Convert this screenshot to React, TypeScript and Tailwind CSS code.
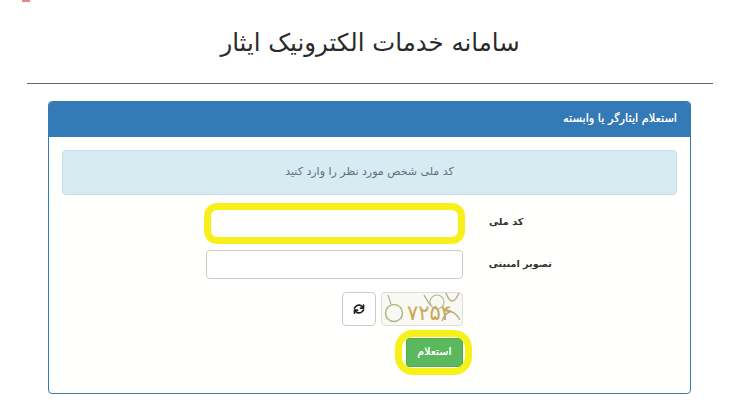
export default function App() {
  return (
    <div dir="rtl" className="relative w-[740px] h-[416px] overflow-hidden bg-white font-['DejaVu_Sans',sans-serif] text-[#333]">
      <span className="absolute left-[22px] top-0 w-[8px] h-[2px] bg-[#d9534f] opacity-70"></span>

      <div className="px-[27px]">
        <h1 className="h-[83px] pt-[4px] flex items-center justify-center text-[24.4px] font-normal text-[#2a2a2a]">سامانه خدمات الکترونیک ایثار</h1>
        <hr className="border-t border-[#666]" />
      </div>

      <div className="ml-[48px] mr-[49px] mt-[17px] h-[293px] bg-[#fffffd] border border-[#337ab7] rounded-[4px] overflow-hidden">
        <div className="h-[35px] bg-[#337ab7] px-[13px] flex items-center text-white text-[11.3px] [text-shadow:0_0_0.6px_#fff]">استعلام ایثارگر یا وابسته</div>

        <div className="px-[13px] pt-[13px]">
          <div className="h-[45px] bg-[#d7ebf3] border border-[#c3e0ea] rounded-[4px] flex items-center justify-center text-[11px] text-[#5b7180]">کد ملی شخص مورد نظر را وارد کنید</div>

          <div className="mt-[14px] flex flex-col gap-[12px] pr-[125px]">
            <div className="flex items-center gap-[26px]">
              <label className="w-[63px] pb-[3px] text-[9.7px] font-bold text-left text-[#333]">کد ملی</label>
              <div className="relative w-[257px] h-[29px]">
                <input className="w-full h-full bg-white border border-[#ccc] rounded-[4px]" />
                <span className="absolute -inset-x-[2px] -top-[6px] -bottom-[6px] border-[7px] border-[#f7f01a] rounded-[13px]"></span>
              </div>
            </div>

            <div className="flex items-center gap-[26px]">
              <label className="w-[63px] pb-[1px] text-[9.7px] font-bold whitespace-nowrap">تصویر امنیتی</label>
              <div className="w-[257px] h-[29px]">
                <input className="w-full h-full bg-white border border-[#ccc] rounded-[4px]" />
              </div>
            </div>

            <div className="mt-[1px] flex items-center gap-[5px] mr-[89px]">
              <div className="w-[82px] h-[34px] border border-[#ddd] rounded-[4px] bg-[#f8f9f2] overflow-hidden">
                <svg width="80" height="32" viewBox="0 0 80 32">
                  <circle cx="12" cy="20" r="8.5" fill="none" stroke="#a9b98a" strokeWidth="1.5" />
                  <path d="M9 11 L6 2" stroke="#c2a976" strokeWidth="1.2" />
                  <text x="25" y="27" fontSize="21" fill="#c9a85a" direction="ltr">۷۲۵۴</text>
                  <circle cx="55" cy="9" r="7" fill="none" stroke="#b9b3a0" strokeWidth="1.2" />
                  <path d="M64 0 Q70 16 77 0 M60 28 Q68 10 78 27 M42 2 L48 12" fill="none" stroke="#b7a57e" strokeWidth="1.3" />
                </svg>
              </div>
              <button className="w-[34px] h-[34px] border border-[#ccc] rounded-[4px] bg-white flex items-center justify-center">
                <svg width="12" height="12" viewBox="0 0 24 24" fill="none" stroke="#222" strokeWidth="3.5" strokeLinecap="round" strokeLinejoin="round">
                  <path d="M21 4v6h-6" />
                  <path d="M3 20v-6h6" />
                  <path d="M20 10a8.5 8.5 0 0 0-14.5-3L3 10" />
                  <path d="M4 14a8.5 8.5 0 0 0 14.5 3L21 14" />
                </svg>
              </button>
            </div>

            <div className="relative w-[57px] h-[29px] mr-[89px]">
              <button className="w-full h-full bg-[#5cb85c] border border-[#4cae4c] rounded-[3px] text-white text-[11px] [text-shadow:0_0_0.5px_#fff]">استعلام</button>
              <span className="absolute -left-[11px] -right-[9px] -top-[8px] -bottom-[8px] border-[7px] border-[#f7f01a] rounded-[18px]"></span>
            </div>
          </div>
        </div>
      </div>
    </div>
  );
}
